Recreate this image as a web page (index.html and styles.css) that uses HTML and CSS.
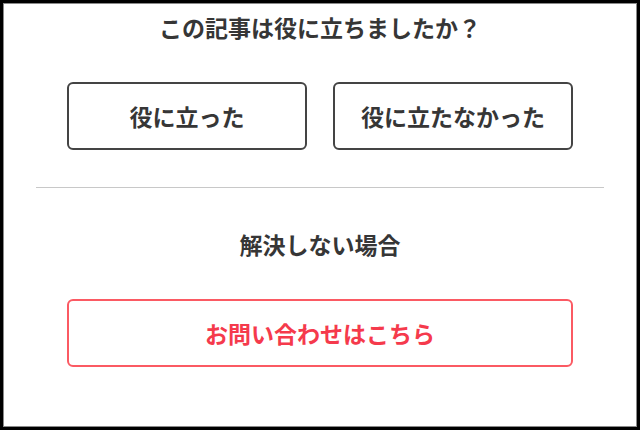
FILE: index.html
```html
<!DOCTYPE html>
<html lang="ja">
<head>
<meta charset="utf-8">
<link rel="stylesheet" href="styles.css">
</head>
<body>
<div class="frame">
  <div class="content">
    <h2 class="title">この記事は役に立ちましたか？</h2>
    <div class="vote">
      <button class="btn">役に立った</button>
      <button class="btn">役に立たなかった</button>
    </div>
    <hr class="divider">
    <h2 class="title title-sub">解決しない場合</h2>
    <div class="contact-wrap">
      <a class="btn btn-contact" href="#">お問い合わせはこちら</a>
    </div>
  </div>
</div>
</body>
</html>
```
FILE: styles.css
```css
* { box-sizing: border-box; }
html, body { margin: 0; padding: 0; }
body {
  background: #000;
  padding: 3px;
  width: 640px;
  height: 430px;
  font-family: "Noto Sans CJK JP", "Noto Sans", sans-serif;
}
.frame {
  background: #fff;
  border: 1px solid #8a8a8a;
  height: 424px;
  padding: 0 32px;
}
.content { padding-top: 8px; }
.title {
  margin: 0;
  font-size: 23px;
  line-height: 30px;
  font-weight: 700;
  color: #363636;
  text-align: center;
}
.vote {
  display: flex;
  gap: 26px;
  margin: 40px 31px 0;
}
.btn {
  flex: 1;
  height: 68px;
  display: flex;
  align-items: center;
  justify-content: center;
  background: #fff;
  border: 2px solid #444;
  border-radius: 6px;
  font-family: inherit;
  font-size: 23px;
  font-weight: 700;
  color: #363636;
  text-decoration: none;
  padding: 0;
}
.divider {
  border: 0;
  border-top: 1px solid #c8c8c8;
  margin: 37px 0 0;
  height: 0;
}
.title-sub { margin-top: 41px; }
.contact-wrap {
  display: flex;
  margin: 40px 31px 0;
}
.btn-contact {
  border-color: #fb5a63;
  color: #f53a4c;
}
```
